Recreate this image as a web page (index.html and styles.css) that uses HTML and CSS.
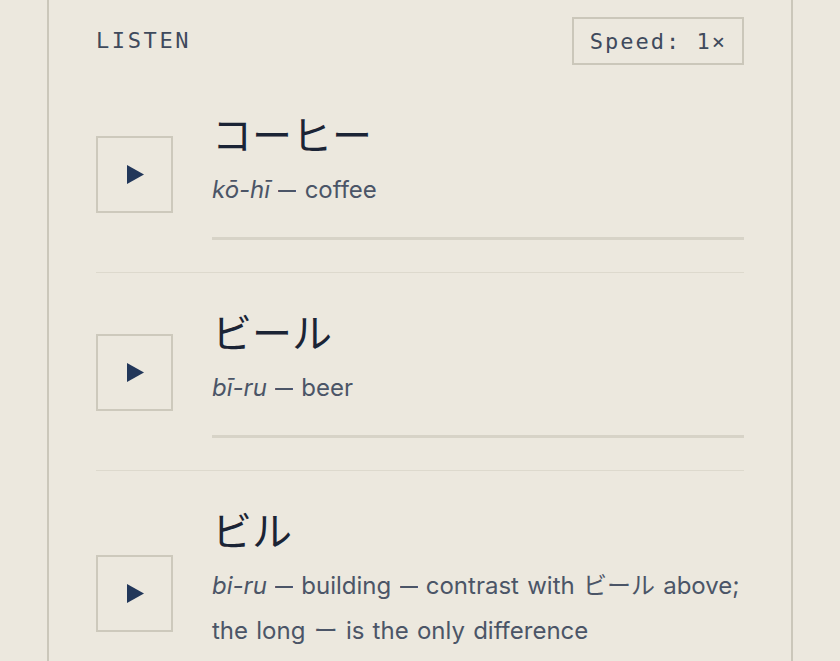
FILE: index.html
```html
<!DOCTYPE html>
<html lang="en">
<head>
<meta charset="utf-8">
<link rel="stylesheet" href="styles.css">
</head>
<body>
<main class="card">
  <header class="head">
    <span class="label">LISTEN</span>
    <button class="speed">Speed: 1×</button>
  </header>
  <ul class="list">
    <li class="row">
      <button class="play" aria-label="Play"><svg viewBox="0 0 17 19" width="17" height="19"><path d="M0 0 L17 9.5 L0 19 Z"/></svg></button>
      <div class="info">
        <div class="word" lang="ja">コーヒー</div>
        <div class="sub"><em>kō-hī</em> <span class="dash">—</span> coffee</div>
        <div class="bar"></div>
      </div>
    </li>
    <li class="row">
      <button class="play" aria-label="Play"><svg viewBox="0 0 17 19" width="17" height="19"><path d="M0 0 L17 9.5 L0 19 Z"/></svg></button>
      <div class="info">
        <div class="word" lang="ja">ビール</div>
        <div class="sub"><em>bī-ru</em> <span class="dash">—</span> beer</div>
        <div class="bar"></div>
      </div>
    </li>
    <li class="row">
      <button class="play" aria-label="Play"><svg viewBox="0 0 17 19" width="17" height="19"><path d="M0 0 L17 9.5 L0 19 Z"/></svg></button>
      <div class="info">
        <div class="word" lang="ja">ビル</div>
        <div class="sub"><em>bi-ru</em> <span class="dash">—</span> building <span class="dash">—</span> contrast with <span lang="ja">ビール</span> above; the long <span lang="ja">ー</span> is the only difference</div>
        <div class="bar"></div>
      </div>
    </li>
  </ul>
</main>
</body>
</html>
```
FILE: styles.css
```css
html, body {
  margin: 0;
  padding: 0;
  background: #ece8de;
}
body {
  font-family: "Inter", "Noto Sans CJK JP", sans-serif;
  color: #1b2435;
}
.card {
  width: 648px;
  margin: -1px auto 0;
  padding: 18px 47px 0;
  border-left: 2px solid #cbc7ba;
  border-right: 2px solid #cbc7ba;
  min-height: 700px;
}
.head {
  display: flex;
  justify-content: space-between;
  align-items: center;
  height: 48px;
  margin-bottom: 10px;
}
.label, .speed {
  font-family: "DejaVu Sans Mono", monospace;
  font-size: 22px;
  color: #3f4a5c;
}
.label {
  letter-spacing: 2.6px;
  margin-top: -2px;
}
.speed {
  letter-spacing: 2px;
  background: transparent;
  border: 2px solid #cbc7ba;
  height: 48px;
  padding: 0 15px 0 16px;
  cursor: pointer;
}
.list {
  list-style: none;
  margin: 0;
  padding: 0;
}
.row {
  display: flex;
  align-items: center;
  gap: 39px;
  padding: 34px 0 32px;
  border-bottom: 1px solid #ddd9cd;
}
.play {
  flex: none;
  width: 77px;
  height: 77px;
  background: transparent;
  border: 2px solid #cdc9bc;
  display: flex;
  align-items: center;
  justify-content: center;
  padding: 0 0 0 1px;
  cursor: pointer;
}
.play svg {
  fill: #22375a;
}
.info {
  flex: 1;
}
.word {
  font-family: "Noto Sans CJK JP", sans-serif;
  font-size: 40px;
  line-height: 48px;
  margin-bottom: 10px;
  color: #1b2435;
}
.sub {
  font-size: 24px;
  line-height: 45px;
  word-spacing: 1.5px;
  color: #4b5567;
}
.sub em {
  font-style: italic;
}
.dash {
  display: inline-block;
  transform: scaleX(0.75);
  margin: 0 -3px;
}
.bar {
  margin-top: 25px;
  height: 3px;
  background: #d7d3c7;
}
```
